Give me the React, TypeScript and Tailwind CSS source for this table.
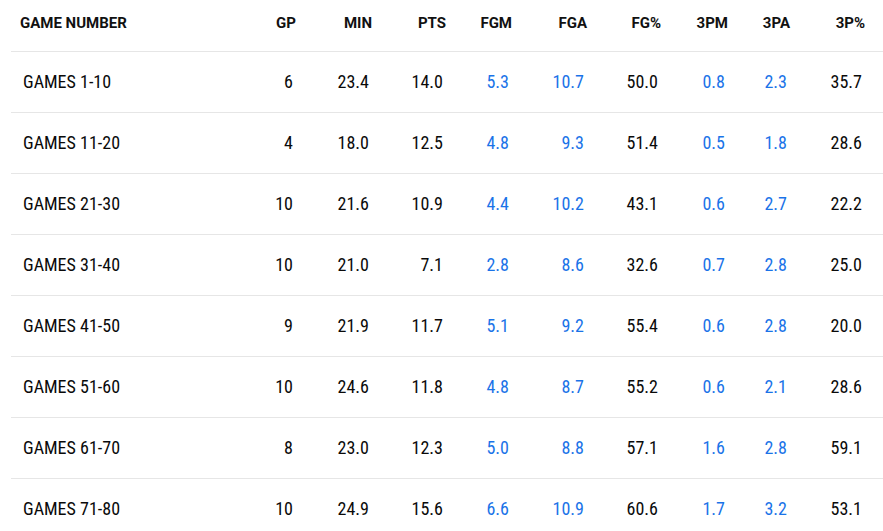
const headers = ["GP", "MIN", "PTS", "FGM", "FGA", "FG%", "3PM", "3PA", "3P%"];

// blue = linked stat columns
const blueCols = [3, 4, 6, 7];

const rows: [string, string[]][] = [
  ["GAMES 1-10", ["6", "23.4", "14.0", "5.3", "10.7", "50.0", "0.8", "2.3", "35.7"]],
  ["GAMES 11-20", ["4", "18.0", "12.5", "4.8", "9.3", "51.4", "0.5", "1.8", "28.6"]],
  ["GAMES 21-30", ["10", "21.6", "10.9", "4.4", "10.2", "43.1", "0.6", "2.7", "22.2"]],
  ["GAMES 31-40", ["10", "21.0", "7.1", "2.8", "8.6", "32.6", "0.7", "2.8", "25.0"]],
  ["GAMES 41-50", ["9", "21.9", "11.7", "5.1", "9.2", "55.4", "0.6", "2.8", "20.0"]],
  ["GAMES 51-60", ["10", "24.6", "11.8", "4.8", "8.7", "55.2", "0.6", "2.1", "28.6"]],
  ["GAMES 61-70", ["8", "23.0", "12.3", "5.0", "8.8", "57.1", "1.6", "2.8", "59.1"]],
  ["GAMES 71-80", ["10", "24.9", "15.6", "6.6", "10.9", "60.6", "1.7", "3.2", "53.1"]],
];

const grid =
  "grid grid-cols-[218px_76px_76px_74px_66px_75px_74px_67px_62px_75px] w-[872px]";

export default function App() {
  return (
    <div className="min-h-[531px] bg-white pl-[11px] font-['Roboto_Condensed','Roboto',sans-serif]">
      <div className={`${grid} h-[52px] items-center border-b border-[#e6e6e6] pb-[5px] font-['Roboto',sans-serif] text-[15px] font-bold text-[#111]`}>
        <div className="pl-[9px]">GAME NUMBER</div>
        {headers.map((h) => (
          <div key={h} className="pr-[9px] text-right">
            {h}
          </div>
        ))}
      </div>

      {rows.map(([label, vals]) => (
        <div
          key={label}
          className={`${grid} h-[61px] items-center border-b border-[#e6e6e6] pb-[2px] text-[18px] font-stretch-condensed text-[#0a0a0a]`}
        >
          <div className="pl-[12px]">{label}</div>
          {vals.map((v, i) => (
            <div
              key={i}
              className={`pr-[12px] text-right ${blueCols.includes(i) ? "text-[#1a73e8]" : ""}`}
            >
              {v}
            </div>
          ))}
        </div>
      ))}
    </div>
  );
}
